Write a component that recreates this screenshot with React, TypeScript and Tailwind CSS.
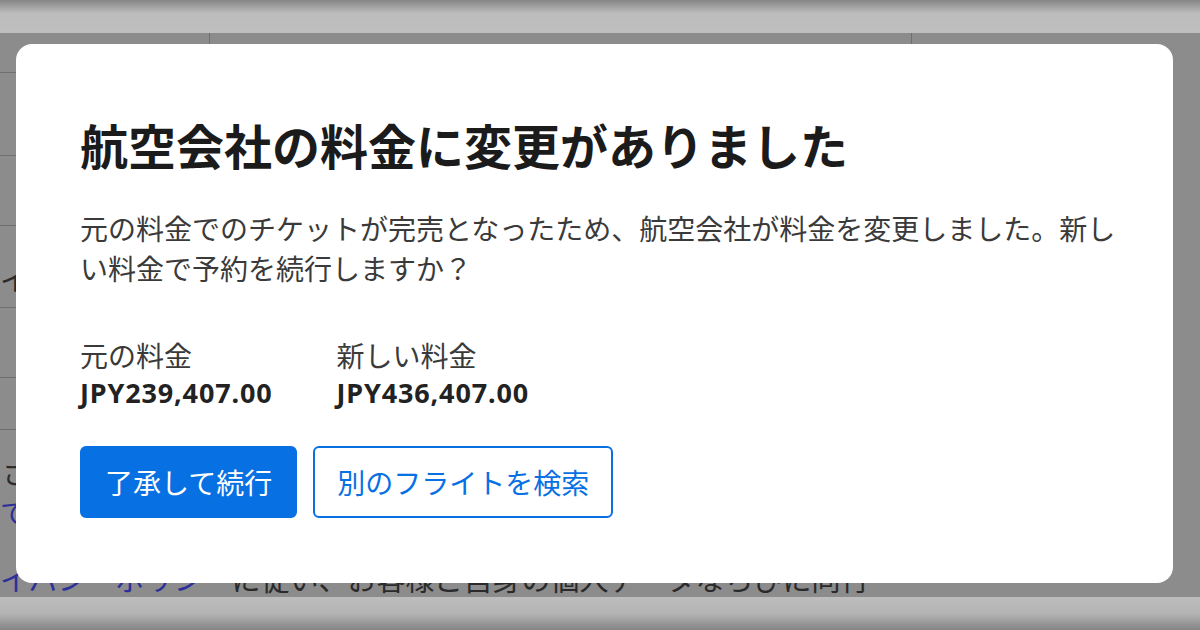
import React from "react";

const JP = { fontFamily: '"Noto Sans CJK JP", "Noto Sans", sans-serif' };
const LATIN = { fontFamily: '"Noto Sans", "Noto Sans CJK JP", sans-serif' };

// 背景の（暗くなった）ページ
function BackdropPage() {
  return (
    <div className="flex h-[630px] w-[1200px] flex-col bg-[#8c8c8c]" style={JP}>
      <div className="h-[33px] shrink-0 bg-gradient-to-b from-[#868686] via-[#bcbcbc] via-40% to-[#bfbfbf]" />
      <div className="flex flex-1 flex-col overflow-hidden">
        <div className="flex">
          <div className="flex w-[210px] flex-col border-r border-[#6f6f6f]">
            <div className="h-[40px] border-b border-[#6f6f6f]" />
            <div className="h-[83px] border-b border-[#6f6f6f]" />
            <div className="h-[70px] border-b border-[#6f6f6f]" />
            <div className="flex h-[82px] items-center border-b border-[#6f6f6f] pt-[24px] text-[28px] text-[#2a2a2a]">
              イ
            </div>
            <div className="h-[70px] border-b border-[#6f6f6f]" />
            <div className="h-[52px] border-b border-[#6f6f6f]" />
          </div>
          <div className="w-[702px] border-r border-[#6f6f6f]" />
          <div className="flex-1" />
        </div>
        <div className="flex flex-col pt-[22px] text-[28px] leading-[40px] text-[#2a2a2a]">
          <p className="pl-[2px]">さらに</p>
          <p className="text-[#2d2f9a]">て</p>
          <p className="mt-[26px] whitespace-nowrap text-[29px]">
            <span className="text-[#2d2f9a]">イバシーポリシー</span>に従い、お客様ご自身の個人データならびに同行
          </p>
        </div>
      </div>
      <div className="h-[33px] shrink-0 bg-gradient-to-b from-[#bdbdbd] via-[#b4b4b4] to-[#858585]" />
    </div>
  );
}

export default function App() {
  return (
    <div className="relative h-[630px] w-[1200px] overflow-hidden">
      <BackdropPage />

      {/* ダイアログ */}
      <div
        className="absolute left-[16px] top-[44px] w-[1157px] rounded-2xl bg-white pb-[65px] pl-16 pr-12 pt-16"
        style={JP}
        role="dialog"
      >
        <h2 className="text-[48px] font-bold leading-[72px] text-[#1b1b1b]">
          航空会社の料金に変更がありました
        </h2>
        <p className="mt-7 text-[28px] leading-[40px] text-[#3a3a3a]">
          元の料金でのチケットが完売となったため、航空会社が料金を変更しました。新しい料金で予約を続行しますか？
        </p>

        <div className="mt-12 flex gap-16">
          <div className="flex flex-col">
            <span className="text-[28px] leading-[38px] text-[#3a3a3a]">元の料金</span>
            <span className="text-[27px] font-bold leading-[38px] tracking-[0.85px] text-[#222222]" style={LATIN}>
              JPY239,407.00
            </span>
          </div>
          <div className="flex flex-col">
            <span className="text-[28px] leading-[38px] text-[#3a3a3a]">新しい料金</span>
            <span className="text-[27px] font-bold leading-[38px] tracking-[0.85px] text-[#222222]" style={LATIN}>
              JPY436,407.00
            </span>
          </div>
        </div>

        <div className="mt-[34px] flex gap-4">
          <button className="h-[72px] rounded-md border-2 border-[#0770e3] bg-[#0770e3] px-[23px] text-[28px] leading-[40px] text-white">
            了承して続行
          </button>
          <button className="h-[72px] rounded-md border-2 border-[#0770e3] bg-white px-[22px] text-[28px] leading-[40px] text-[#0770e3]">
            別のフライトを検索
          </button>
        </div>
      </div>
    </div>
  );
}
